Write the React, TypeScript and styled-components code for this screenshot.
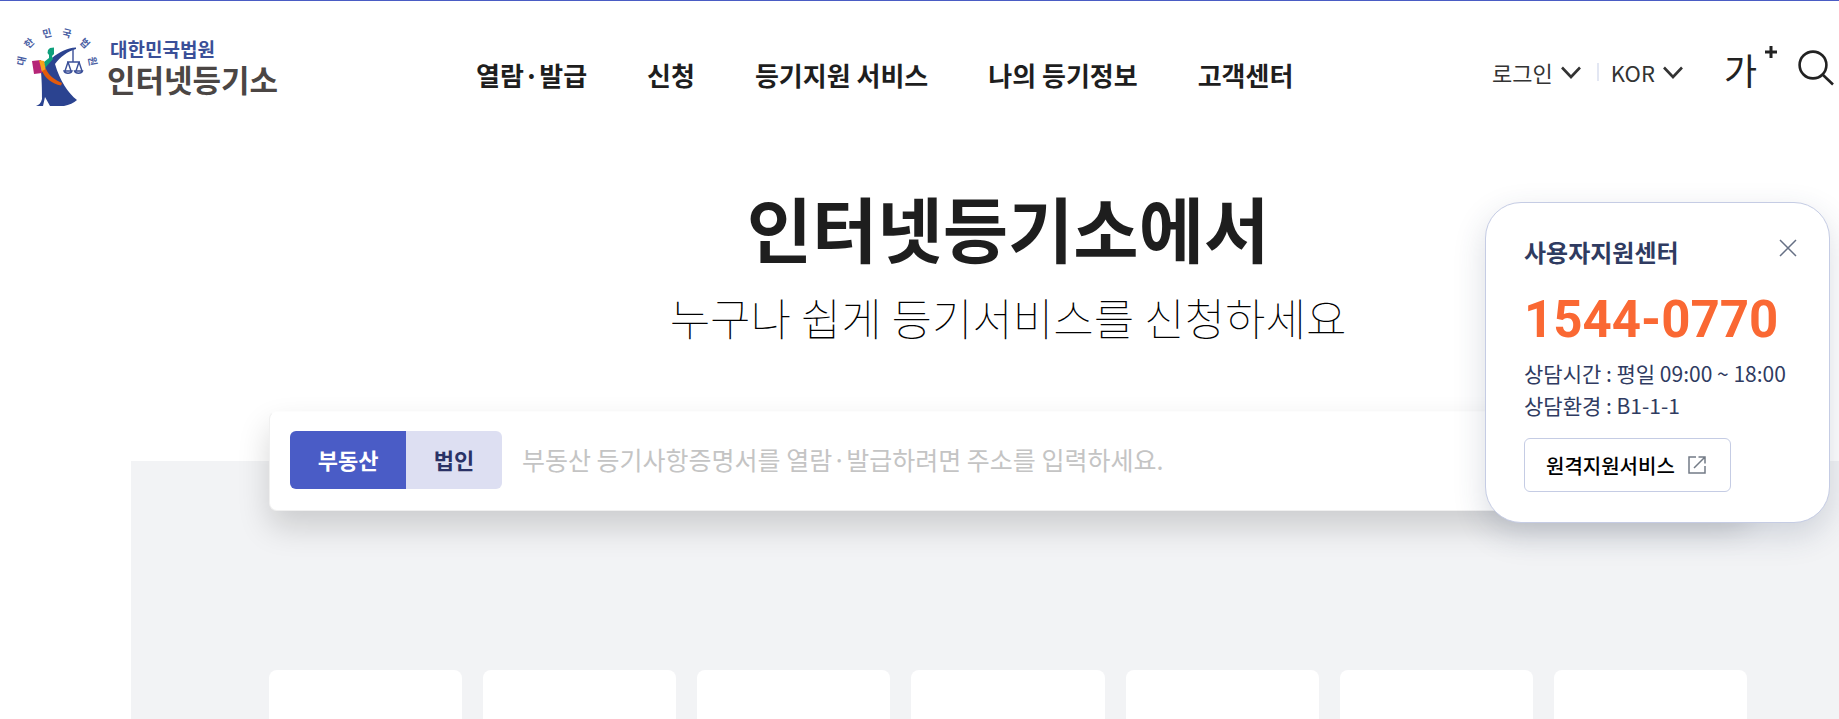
import React from "react";
import styled, { createGlobalStyle, css } from "styled-components";

const GlobalStyle = createGlobalStyle`
  *, *::before, *::after { box-sizing: border-box; }
  body {
    margin: 0;
    background: #fff;
    color: #1e1e1e;
    font-family: "Noto Sans CJK KR", "Noto Sans", sans-serif;
  }
  h1, h2, p, ul { margin: 0; padding: 0; }
  ul { list-style: none; }
  a { color: inherit; text-decoration: none; }
  button, input { font: inherit; }
  button { padding: 0; border: 0; background: none; color: inherit; cursor: pointer; }
`;

const Page = styled.div`
  display: flex;
  flex-direction: column;
  min-height: 100vh;
  border-top: 1px solid #4a5cc4;
`;

const Header = styled.header`
  display: flex;
  align-items: center;
  height: 132px;
  padding: 0 4px 0 14px;
`;

const Logo = styled.a`
  display: flex;
  align-items: flex-start;
  gap: 6px;
  flex-shrink: 0;
  width: 462px;
`;

const EmblemArt = styled.svg`
  flex-shrink: 0;
  overflow: visible;
`;

const LogoText = styled.span`
  display: flex;
  flex-direction: column;
  padding-top: 9px;
`;

const LogoCourt = styled.span`
  color: #3a4f98;
  font-size: 19px;
  font-weight: 700;
  line-height: 24px;
  padding-left: 3px;
`;

const LogoName = styled.strong`
  color: #4b4644;
  font-size: 31px;
  font-weight: 700;
  line-height: 36px;
`;

const Nav = styled.nav`
  display: flex;
  gap: 60px;
  padding-top: 16px;
  white-space: nowrap;
`;

const NavLink = styled.a`
  font-size: 26px;
  font-weight: 700;
  line-height: 36px;
`;

const Utilities = styled.div`
  display: flex;
  align-items: center;
  margin-left: auto;
  padding-top: 4px;
`;

const UtilityButton = styled.button`
  display: flex;
  align-items: center;
  gap: 8px;
  color: #333;
  font-size: 22px;
  line-height: 32px;
  white-space: nowrap;
`;

const UtilityGroup = styled.div`
  display: flex;
  align-items: center;
  padding-top: 6px;
`;

const Divider = styled.span`
  width: 2px;
  height: 18px;
  margin: 0 12px 0 16px;
  background: #e3e7f3;
`;

const TextSizeButton = styled.button`
  display: flex;
  align-items: flex-start;
  gap: 8px;
  margin: 0 20px 0 41px;
  color: #222;
  font-size: 36px;
  line-height: 46px;
`;

const SearchButton = styled.button`
  display: flex;
`;

const Hero = styled.section`
  position: relative;
  z-index: 1;
  display: flex;
  flex-direction: column;
  align-items: center;
  margin-bottom: -50px;
  padding: 45px 92px 0 269px;
  text-align: center;
`;

const Title = styled.h1`
  font-size: 71px;
  font-weight: 700;
  line-height: 96px;
`;

const Subtitle = styled.p`
  color: #000;
  font-size: 44px;
  font-weight: 100;
  line-height: 64px;
  padding-top: 11px;
`;

const SearchBar = styled.form`
  display: flex;
  align-items: center;
  gap: 20px;
  width: 100%;
  height: 100px;
  margin-top: 62px;
  padding: 0 20px 2px;
  border: 1px solid #f0f0f0;
  border-top-color: #fdfdfd;
  border-radius: 8px;
  background: #fff;
  box-shadow: 0 16px 32px rgba(0, 0, 0, 0.16);
`;

const Toggle = styled.div`
  display: flex;
  flex-shrink: 0;
  width: 212px;
`;

const ToggleButton = styled.button<{ $active?: boolean }>`
  flex: 1 1 auto;
  height: 58px;
  padding: 0 27px 2px;
  font-size: 22px;
  font-weight: 700;
  ${({ $active }) =>
    $active
      ? css`
          border-radius: 6px 0 0 6px;
          background: #4a5cc6;
          color: #fff;
        `
      : css`
          border-radius: 0 6px 6px 0;
          background: #dddff2;
          color: #2a3266;
        `}
`;

const SearchInput = styled.input`
  flex: 1;
  min-width: 0;
  height: 58px;
  padding: 0 0 2px;
  border: 0;
  outline: 0;
  background: transparent;
  font-size: 25px;
  &::placeholder {
    color: #c4c4c4;
    opacity: 1;
  }
`;

const Services = styled.section`
  display: flex;
  flex: 1;
  margin-left: 131px;
  padding: 209px 92px 0 138px;
  background: #f2f3f5;
`;

const ServiceGrid = styled.ul`
  display: grid;
  flex: 1;
  grid-template-columns: repeat(7, 1fr);
  gap: 21px;
  min-height: 48px;
`;

const ServiceCard = styled.li`
  border-radius: 8px 8px 0 0;
  background: #fff;
`;

const SupportPanel = styled.aside`
  position: absolute;
  z-index: 2;
  top: 202px;
  right: 9px;
  width: 345px;
  padding: 31px 32px 30px 38px;
  border: 1px solid #c5cce4;
  border-radius: 36px;
  background: #fff;
  color: #2f3b61;
  box-shadow: 0 12px 32px rgba(44, 62, 92, 0.18);
`;

const SupportHead = styled.div`
  display: flex;
  align-items: flex-start;
  justify-content: space-between;
`;

const SupportTitle = styled.h2`
  font-size: 24px;
  font-weight: 700;
  line-height: 36px;
`;

const CloseButton = styled.button`
  display: flex;
  padding-top: 5px;
  color: #667085;
`;

const Phone = styled.p`
  padding: 20px 0 7px;
  color: #fa6833;
  font-family: Roboto, sans-serif;
  font-size: 51px;
  font-weight: 700;
  line-height: 60px;
`;

const SupportInfo = styled.p`
  font-size: 21px;
  line-height: 32px;
  white-space: nowrap;
`;

const RemoteLink = styled.a`
  display: inline-flex;
  align-items: center;
  gap: 13px;
  height: 54px;
  margin-top: 17px;
  padding: 0 24px 0 21px;
  border: 1px solid #c5cce4;
  border-radius: 6px;
  color: #000;
  font-size: 20px;
  font-weight: 500;
  vertical-align: top;
`;

const MENU = ["열람·발급", "신청", "등기지원 서비스", "나의 등기정보", "고객센터"];
const SERVICES = [1, 2, 3, 4, 5, 6, 7];

const ARC_LETTERS = [
  { char: "대", x: 7, y: 33, turn: -78 },
  { char: "한", x: 15, y: 15, turn: -45 },
  { char: "민", x: 33, y: 5, turn: -14 },
  { char: "국", x: 53, y: 5, turn: 14 },
  { char: "법", x: 71, y: 15, turn: 45 },
  { char: "원", x: 79, y: 33, turn: 80 },
];

const Emblem = () => (
  <EmblemArt width="87" height="78" viewBox="0 0 87 78" aria-hidden="true">
    <g fill="#4a5ea3" fontSize="10" fontWeight="700" textAnchor="middle">
      {ARC_LETTERS.map(({ char, x, y, turn }) => (
        <text key={char} transform={`translate(${x} ${y}) rotate(${turn})`} dy="4">
          {char}
        </text>
      ))}
    </g>
    <path
      d="M62 19.5 C53 20 45 24 38 30 L30 36 L27 44 C28 55 28 66 28 71 C27 75 25 77 22 78 H29 L31 69 L36 78 H50 C55 77 60 75 63 72 C54 65 46 53 41 36 C46 29 54 23 62 21Z"
      fill="#2b4390"
    />
    <path d="M34 22 L36 20 L40 19.5 L40 26 L38 28 L39 31 L31 40 L30 34 L35 30 L35 27 L33.5 25Z" fill="#0ea07c" />
    <path d="M18 33 L27 32 L28 45 L20 46Z" fill="#b62577" />
    <path d="M25 32 L30 33 L32 43 L28 44Z" fill="#f6a21b" />
    <path d="M28 43 L32 41 C35 48 41 52 48 55 L47 57.5 C38 56 31 50 28 43Z" fill="#e35a0c" />
    <g fill="none" stroke="#3a4f98" strokeWidth="1.4">
      <path d="M59 20 V34 M53 34 H66 M54 34 L51 43 M54 34 L57 43 M65 34 L62 43 M65 34 L68 43" />
      <path d="M50 43 H58 C57 46 51 46 50 43Z M60.500 43 H68.500 C67.500 46 61.500 46 60.500 43Z" />
    </g>
  </EmblemArt>
);

const Chevron = () => (
  <svg width="20" height="13" viewBox="0 0 20 13" fill="none" stroke="#333" strokeWidth="2.6" aria-hidden="true">
    <path d="M1 1.5 L10 11 L19 1.5" />
  </svg>
);

const Plus = () => (
  <svg width="12" height="12" viewBox="0 0 12 12" stroke="#222" strokeWidth="3" aria-hidden="true">
    <path d="M6 0 V12 M0 6 H12" />
  </svg>
);

const SearchIcon = () => (
  <svg width="38" height="38" viewBox="0 0 38 38" fill="none" stroke="#222" strokeWidth="2.6" aria-hidden="true">
    <circle cx="16" cy="15" r="13.4" />
    <path d="M25.500 24.500 L36 34.500" />
  </svg>
);

const CloseIcon = () => (
  <svg width="18" height="18" viewBox="0 0 18 18" stroke="currentColor" strokeWidth="1.5" aria-hidden="true">
    <path d="M1 1 L17 17 M17 1 L1 17" />
  </svg>
);

const ExternalIcon = () => (
  <svg width="18" height="18" viewBox="0 0 18 18" fill="none" stroke="#737b86" strokeWidth="1.5" aria-hidden="true">
    <path d="M8 1 H1 V17 H17 V10 M10.5 1 H17 V7.5 M17 1 L6 12" />
  </svg>
);

export default function App() {
  return (
    <Page>
      <GlobalStyle />
      <Header>
        <Logo href="#">
          <Emblem />
          <LogoText>
            <LogoCourt>대한민국법원</LogoCourt>
            <LogoName>인터넷등기소</LogoName>
          </LogoText>
        </Logo>
        <Nav>
          {MENU.map((label) => (
            <NavLink key={label} href="#">
              {label}
            </NavLink>
          ))}
        </Nav>
        <Utilities>
          <UtilityGroup>
            <UtilityButton type="button">
              로그인
              <Chevron />
            </UtilityButton>
            <Divider />
            <UtilityButton type="button">
              KOR
              <Chevron />
            </UtilityButton>
          </UtilityGroup>
          <TextSizeButton type="button">
            가
            <Plus />
          </TextSizeButton>
          <SearchButton type="button" aria-label="검색">
            <SearchIcon />
          </SearchButton>
        </Utilities>
      </Header>

      <Hero>
        <Title>인터넷등기소에서</Title>
        <Subtitle>누구나 쉽게 등기서비스를 신청하세요</Subtitle>
        <SearchBar>
          <Toggle>
            <ToggleButton type="button" $active>
              부동산
            </ToggleButton>
            <ToggleButton type="button">법인</ToggleButton>
          </Toggle>
          <SearchInput
            type="text"
            aria-label="주소"
            placeholder="부동산 등기사항증명서를 열람·발급하려면 주소를 입력하세요."
          />
        </SearchBar>
      </Hero>

      <Services>
        <ServiceGrid>
          {SERVICES.map((id) => (
            <ServiceCard key={id} />
          ))}
        </ServiceGrid>
      </Services>

      <SupportPanel>
        <SupportHead>
          <SupportTitle>사용자지원센터</SupportTitle>
          <CloseButton type="button" aria-label="닫기">
            <CloseIcon />
          </CloseButton>
        </SupportHead>
        <Phone>1544-0770</Phone>
        <SupportInfo>상담시간 : 평일 09:00 ~ 18:00</SupportInfo>
        <SupportInfo>상담환경 : B1-1-1</SupportInfo>
        <RemoteLink href="#">
          원격지원서비스
          <ExternalIcon />
        </RemoteLink>
      </SupportPanel>
    </Page>
  );
}
